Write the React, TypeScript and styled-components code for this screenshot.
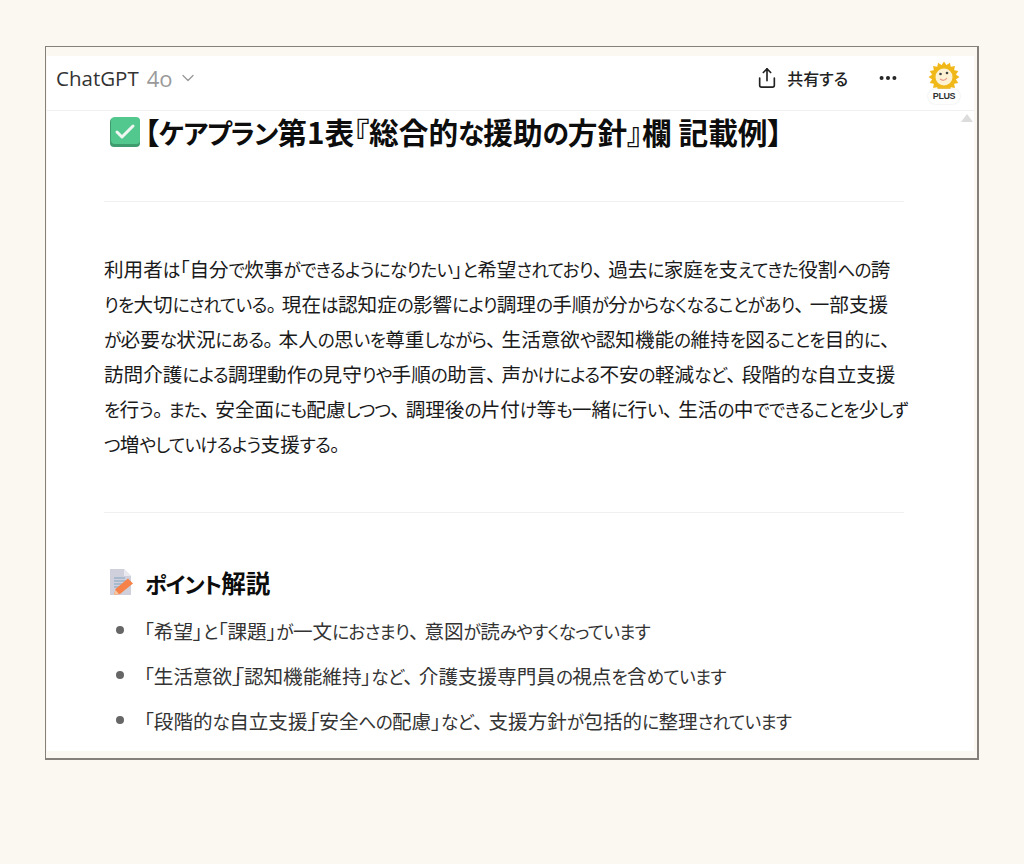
import React from "react";
import styled, { createGlobalStyle } from "styled-components";
import { ChevronDown, Share, Ellipsis } from "lucide-react";

const Global = createGlobalStyle`
  html, body { margin: 0; padding: 0; background: #fbf8f1; }
  body { font-family: "Noto Sans CJK JP", "Noto Sans", sans-serif; }
`;
const Page = styled.div`
  width: 1024px; height: 864px; box-sizing: border-box; padding: 46px 45px 0 45px; overflow: hidden;
`;
const Frame = styled.div`
  height: 714px; box-sizing: border-box; border: 1px solid #85807a; border-right-width: 2px; border-bottom-width: 2px;
  padding: 9px 3px 7px 1px; display: flex;
`;
const Window = styled.div`
  flex: 1; background: #fff; display: flex; flex-direction: column; position: relative; overflow: hidden;
`;
const Header = styled.header`
  height: 55px; flex: none; box-sizing: border-box; border-bottom: 1px solid #f0f0f0;
  display: flex; align-items: center; padding: 0 10px 10px 9px;
`;
const Model = styled.div`
  display: flex; align-items: center; font-family: "Open Sans", sans-serif; font-size: 20.5px; color: #333;
`;
const Version = styled.span` color: #9a9a9a; margin-left: 8px; font-size: 22px; `;
const Spacer = styled.div` flex: 1; `;
const ShareButton = styled.div`
  display: flex; align-items: center; gap: 9px; font-size: 16px; font-weight: 500; color: #222;
  font-feature-settings: "palt";
`;
const More = styled.div` display: flex; margin-left: 29px; color: #222; `;
const Avatar = styled.div`
  width: 40px; margin-left: 25px; margin-top: 9px; display: flex; flex-direction: column; align-items: center;
`;
const PlusBadge = styled.div`
  margin-top: -4px; width: 32px; height: 15px; border-radius: 8px; background: #fff; box-shadow: 0 0 2px #ddd;
  font: 700 9px/15px "Liberation Sans", sans-serif; letter-spacing: -0.4px; text-align: center; color: #333; position: relative;
`;
const ScrollArrow = styled.div`
  position: absolute; right: 1px; top: 58px; width: 0; height: 0;
  border-left: 6px solid transparent; border-right: 6px solid transparent; border-bottom: 8px solid #dcdcdc;
`;
const Content = styled.main`
  width: 800px; margin-left: 57px; color: #111; font-feature-settings: "palt";
`;
const TitleRow = styled.h1`
  margin: 0 0 0 6px; display: flex; align-items: center; gap: 4px; height: 42px;
  font-size: 29.7px; line-height: 42px; font-weight: 700; color: #0d0d0d; white-space: nowrap;
`;
const TitleText = styled.span` display: block; `;
const Rule = styled.hr`
  border: 0; border-top: 1px solid #f0f0f0; margin: 0;
`;
const FirstRule = styled(Rule)` margin-top: 48px; `;
const Paragraph = styled.p`
  margin: 49px 0 51px; font-size: 19.6px; line-height: 35px; color: #1a1a1a; white-space: nowrap;
`;
const Line = styled.span` display: block; `;
const SubRow = styled.h2`
  margin: 51px 0 0 6px; display: flex; align-items: center; gap: 11px; height: 36px;
  font-size: 24.5px; font-weight: 700; color: #0d0d0d;
`;
const List = styled.ul`
  margin: 8px 0 0; padding: 0; list-style: none; display: flex; flex-direction: column;
`;
const Item = styled.li`
  height: 45px; line-height: 45px; font-size: 19.6px; color: #333; display: flex;
  &::before { content: ""; width: 8px; height: 8px; border-radius: 50%; background: #666; margin: 18px 20px 0 12px; flex: none; }
`;
const ItemText = styled.span` display: block; white-space: nowrap; `;
const Punct = styled.span` padding-right: 0.28em; `;
const Closer = styled.span` letter-spacing: -0.4em; `;
const Kana = styled.span` font-size: 0.9em; letter-spacing: -0.04em; line-height: 1; `;

const KANA = /^[\u3041-\u309f\u30a0-\u30ff]+$/;
const Typeset = ({ text }: { text: string }) => (
  <>
    {text.split(/(」(?=「)|[、。]|[\u3041-\u309f\u30a0-\u30ff]+)/).map((part, i) => {
      if (i % 2 === 1 && part === "」") return <Closer key={i}>{part}</Closer>;
      if (part === "、" || part === "。") return <Punct key={i}>{part}</Punct>;
      if (KANA.test(part)) return <Kana key={i}>{part}</Kana>;
      return <React.Fragment key={i}>{part}</React.Fragment>;
    })}
  </>
);

const CheckEmoji = () => (
  <svg width="30" height="30" viewBox="0 0 30 30">
    <rect x="0" y="1" width="30" height="29" rx="4" fill="#3f9c6f" />
    <rect x="1" y="0" width="29" height="27" rx="4" fill="#52c78e" />
    <path d="M7 15l5 5 11-11" fill="none" stroke="#f2f6f3" strokeWidth="3" strokeLinecap="round" strokeLinejoin="round" />
  </svg>
);
const MemoEmoji = () => (
  <svg width="24" height="27" viewBox="0 0 24 27">
    <path d="M0 0h14l7 7v19H0z" fill="#cfd0dc" />
    <path d="M14 0l7 7h-7z" fill="#e8e8ee" />
    <path d="M4 9h11M4 12h13M4 15h10M4 18h6" stroke="#9fb3c9" strokeWidth="1.4" />
    <path d="M4 26l1.5-6L18 9.5l5 5L10 25z" fill="#f6824a" />
    <path d="M4 26l1.5-5 3.5 4z" fill="#f5c6a0" />
  </svg>
);
const Sun = () => {
  const rays = Array.from({ length: 16 }, (_, i) => (i * 360) / 16);
  return (
    <svg width="32" height="32" viewBox="0 0 32 32">
      {rays.map((r) => (
        <path key={r} d="M13 5L16 0.5 19 5z" fill="#f0b818" transform={`rotate(${r} 16 16)`} />
      ))}
      <circle cx="16" cy="16" r="12" fill="#f0b818" />
      <circle cx="16" cy="16" r="8.5" fill="#fdf3d4" />
      <circle cx="12.5" cy="13" r="1.3" fill="#444" />
      <circle cx="19" cy="12" r="1.3" fill="#444" />
      <path d="M12 18q4 3 7-1" fill="none" stroke="#e79a8a" strokeWidth="1.2" />
    </svg>
  );
};

const title = "【ケアプラン第1表『総合的な援助の方針』欄 記載例】";
const lines = [
  "利用者は「自分で炊事ができるようになりたい」と希望されており、過去に家庭を支えてきた役割への誇",
  "りを大切にされている。現在は認知症の影響により調理の手順が分からなくなることがあり、一部支援",
  "が必要な状況にある。本人の思いを尊重しながら、生活意欲や認知機能の維持を図ることを目的に、",
  "訪問介護による調理動作の見守りや手順の助言、声かけによる不安の軽減など、段階的な自立支援",
  "を行う。また、安全面にも配慮しつつ、調理後の片付け等も一緒に行い、生活の中でできることを少しず",
  "つ増やしていけるよう支援する。",
];
const points = [
  "「希望」と「課題」が一文におさまり、意図が読みやすくなっています",
  "「生活意欲」「認知機能維持」など、介護支援専門員の視点を含めています",
  "「段階的な自立支援」「安全への配慮」など、支援方針が包括的に整理されています",
];

export default function App() {
  return (
    <Page>
      <Global />
      <Frame>
        <Window>
          <Header>
            <Model>
              ChatGPT<Version>4o</Version>
              <ChevronDown size={20} strokeWidth={1.6} color="#9a9a9a" style={{ marginLeft: 5 }} />
            </Model>
            <Spacer />
            <ShareButton>
              <Share size={22} strokeWidth={1.8} />
              共有する
            </ShareButton>
            <More><Ellipsis size={22} strokeWidth={2.4} /></More>
            <Avatar>
              <Sun />
              <PlusBadge>PLUS</PlusBadge>
            </Avatar>
          </Header>
          <ScrollArrow />
          <Content>
            <TitleRow><CheckEmoji /><TitleText><Typeset text={title} /></TitleText></TitleRow>
            <FirstRule />
            <Paragraph>
              {lines.map((l) => (
                <Line key={l}><Typeset text={l} /></Line>
              ))}
            </Paragraph>
            <Rule />
            <SubRow><MemoEmoji /><TitleText><Typeset text="ポイント解説" /></TitleText></SubRow>
            <List>
              {points.map((p) => (
                <Item key={p}><ItemText><Typeset text={p} /></ItemText></Item>
              ))}
            </List>
          </Content>
        </Window>
      </Frame>
    </Page>
  );
}
